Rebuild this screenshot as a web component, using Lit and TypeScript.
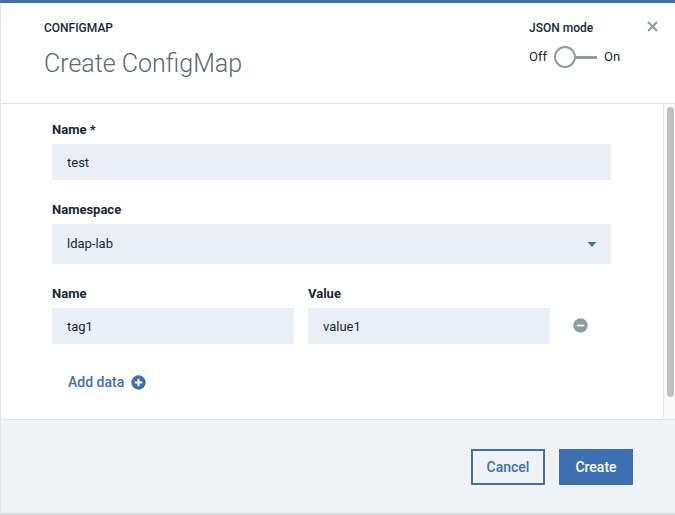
import { LitElement, html, css } from "lit";
import { customElement, state } from "lit/decorators.js";

interface DataRow {
  name: string;
  value: string;
}

@customElement("app-root")
export class AppRoot extends LitElement {
  @state() private rows: DataRow[] = [{ name: "tag1", value: "value1" }];
  @state() private jsonMode = false;

  static styles = css`
    :host {
      display: block;
      box-sizing: border-box;
      padding-bottom: 2px;
      background: #dcdfe1;
      font-family: Roboto, "Noto Sans", sans-serif;
      font-size: 13px;
      line-height: 18px;
      color: #152935;
    }
    *,
    *::before,
    *::after {
      box-sizing: border-box;
    }
    button,
    input,
    select {
      font: inherit;
      color: inherit;
      border: 0;
      margin: 0;
      border-radius: 0;
    }
    button {
      cursor: pointer;
      padding: 0;
      background: none;
    }
    svg {
      display: block;
    }
    .modal {
      border-top: 3px solid #3d70b2;
      background: #fff;
    }
    .inner {
      border-left: 1px solid #e2e5e9;
    }
    .header {
      display: flex;
      align-items: flex-start;
      padding: 16px 15px 18px 43px;
      border-bottom: 1px solid #dfe3e6;
    }
    .titles {
      flex: 1;
    }
    .kicker,
    .mode-label {
      display: block;
      margin: 0;
      font-size: 12px;
      line-height: 19px;
      font-weight: 500;
    }
    .title {
      margin: 5px 0 0;
      font-size: 25px;
      line-height: 42px;
      font-weight: 300;
      color: #5a6872;
    }
    .mode {
      width: 116px;
    }
    .mode-row {
      display: flex;
      align-items: center;
      gap: 7px;
      margin-top: 8px;
      height: 22px;
    }
    .switch {
      appearance: none;
      display: flex;
      align-items: center;
      width: 43px;
      height: 22px;
      cursor: pointer;
    }
    .switch::before {
      content: "";
      width: 22px;
      height: 22px;
      border: 2px solid #8c9ba5;
      border-radius: 50%;
    }
    .switch::after {
      content: "";
      flex: 1;
      height: 3px;
      background: #8c9ba5;
    }
    .switch:checked::before {
      order: 1;
      border-color: #3d70b2;
    }
    .switch:checked::after {
      background: #3d70b2;
    }
    .close {
      padding: 2px;
    }
    .body {
      display: flex;
    }
    .form {
      flex: 1;
      display: flex;
      flex-direction: column;
      gap: 21px;
      padding: 17px 52px 20px 51px;
    }
    .field {
      display: flex;
      flex-direction: column;
      gap: 5px;
      min-width: 0;
    }
    .field label {
      font-weight: 700;
    }
    .field input,
    .field select {
      width: 100%;
      height: 36px;
      padding: 0 15px;
      background: #eaeff7;
    }
    .select-wrap {
      display: grid;
      align-items: center;
    }
    .select-wrap > * {
      grid-area: 1 / 1;
    }
    .field select {
      appearance: none;
      height: 40px;
    }
    .caret {
      justify-self: end;
      margin-right: 14px;
      pointer-events: none;
    }
    .row {
      display: grid;
      grid-template-columns: 1fr 1fr 33px;
      gap: 14px;
      align-items: end;
      padding-right: 14px;
    }
    .remove {
      height: 38px;
      display: grid;
      place-items: center;
    }
    .add {
      align-self: flex-start;
      display: flex;
      align-items: center;
      gap: 7px;
      height: 34px;
      padding: 0 16px;
      font-size: 14px;
      font-weight: 500;
      color: #3d70b2;
    }
    .track {
      width: 12px;
      padding: 3px 1px 22px 3px;
      border-left: 1px solid #e8e8e8;
      background: #fafafa;
    }
    .thumb {
      height: 100%;
      border-radius: 4px;
      background: #c1c1c1;
    }
    .footer {
      display: flex;
      justify-content: flex-end;
      gap: 14px;
      padding: 29px 42px 28px;
      border-top: 1px solid #dfe3e6;
      background: #eff3f6;
    }
    .btn {
      width: 74px;
      height: 36px;
      border: 2px solid #3d70b2;
      font-size: 14px;
      font-weight: 500;
      color: #3d70b2;
    }
    .primary {
      background: #3d70b2;
      color: #fff;
    }
  `;

  private addRow() {
    this.rows = [...this.rows, { name: "", value: "" }];
  }

  private removeRow(index: number) {
    this.rows = this.rows.filter((_, i) => i !== index);
  }

  private renderRow(row: DataRow, i: number) {
    return html`
      <div class="row">
        <div class="field">
          <label for="key-${i}">Name</label>
          <input id="key-${i}" type="text" .value=${row.name} />
        </div>
        <div class="field">
          <label for="value-${i}">Value</label>
          <input id="value-${i}" type="text" .value=${row.value} />
        </div>
        <button class="remove" type="button" aria-label="Remove data" @click=${() => this.removeRow(i)}>
          <svg width="15" height="15" viewBox="0 0 15 15">
            <circle cx="7.5" cy="7.5" r="7.2" fill="#8c9ba5" />
            <path d="M3.8 7.5h7.4" stroke="#fff" stroke-width="1.8" />
          </svg>
        </button>
      </div>
    `;
  }

  render() {
    return html`
      <section class="modal" role="dialog" aria-labelledby="title">
        <div class="inner">
          <header class="header">
            <div class="titles">
              <p class="kicker">CONFIGMAP</p>
              <h1 class="title" id="title">Create ConfigMap</h1>
            </div>
            <div class="mode">
              <label class="mode-label" for="json">JSON mode</label>
              <div class="mode-row">
                <span>Off</span>
                <input
                  id="json"
                  class="switch"
                  type="checkbox"
                  role="switch"
                  .checked=${this.jsonMode}
                  @change=${() => (this.jsonMode = !this.jsonMode)}
                />
                <span>On</span>
              </div>
            </div>
            <button class="close" type="button" aria-label="Close">
              <svg width="11" height="11" viewBox="0 0 11 11">
                <path d="M1 1l9 9M10 1l-9 9" stroke="#8c9ba5" stroke-width="2.2" />
              </svg>
            </button>
          </header>
          <div class="body">
            <form class="form">
              <div class="field">
                <label for="name">Name *</label>
                <input id="name" type="text" value="test" />
              </div>
              <div class="field">
                <label for="namespace">Namespace</label>
                <div class="select-wrap">
                  <select id="namespace">
                    <option>ldap-lab</option>
                  </select>
                  <svg class="caret" width="10" height="5" viewBox="0 0 10 5">
                    <path d="M0.5 0h9L5 5z" fill="#3d70b2" />
                  </svg>
                </div>
              </div>
              ${this.rows.map((row, i) => this.renderRow(row, i))}
              <button class="add" type="button" @click=${this.addRow}>
                Add data
                <svg width="15" height="15" viewBox="0 0 15 15">
                  <circle cx="7.5" cy="7.5" r="7.2" fill="#3d70b2" />
                  <path d="M3.8 7.5h7.4M7.5 3.8v7.4" stroke="#fff" stroke-width="2" />
                </svg>
              </button>
            </form>
            <div class="track" aria-hidden="true"><div class="thumb"></div></div>
          </div>
          <footer class="footer">
            <button class="btn" type="button">Cancel</button>
            <button class="btn primary" type="button">Create</button>
          </footer>
        </div>
      </section>
    `;
  }
}
